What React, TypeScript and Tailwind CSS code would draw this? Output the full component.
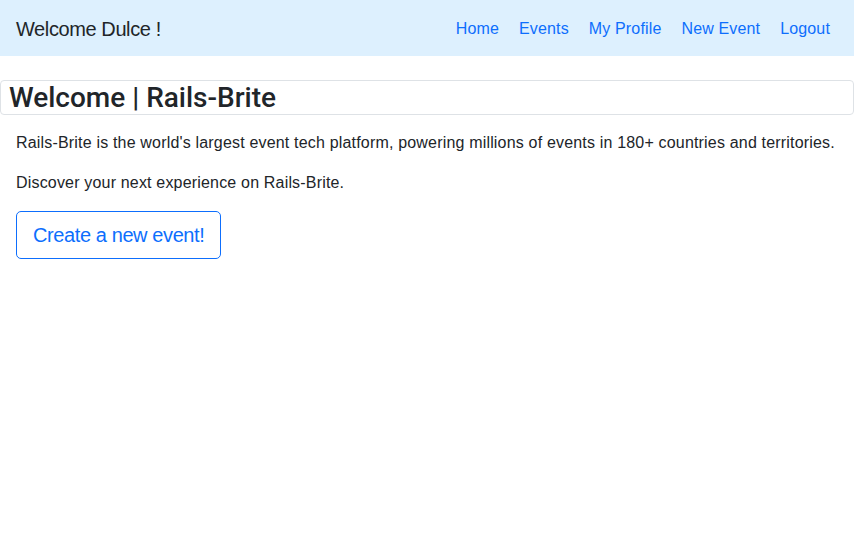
const links = ["Home", "Events", "My Profile", "New Event", "Logout"];

export default function App() {
  return (
    <div className="min-h-[540px] bg-white text-[#212529] font-['Liberation_Sans',sans-serif]">
      <nav className="flex h-14 items-center justify-between bg-[#ddf0fe] pl-4 pr-[14px] pt-px">
        <span className="text-xl tracking-[-0.4px] text-[#212529]">Welcome Dulce !</span>
        <ul className="flex">
          {links.map((l) => (
            <li key={l}>
              <a href="#" className="block px-[10px] text-base tracking-[0.15px] text-[#0d6efd]">
                {l}
              </a>
            </li>
          ))}
        </ul>
      </nav>
      <div className="mt-6 rounded border border-[#dee2e6] px-2 leading-[33px]">
        <h1 className="font-['Roboto',sans-serif] text-[28px] font-medium">Welcome | Rails-Brite</h1>
      </div>
      <main className="px-4 pt-4 tracking-[0.18px]">
        <p className="mb-4 text-base leading-6">
          Rails-Brite is the world's largest event tech platform, powering millions of events in 180+ countries and territories.
        </p>
        <p className="mb-4 text-base leading-6">Discover your next experience on Rails-Brite.</p>
        <a
          href="#"
          className="inline-block rounded-[5px] border border-[#0d6efd] px-4 py-2 text-xl leading-[30px] tracking-[-0.4px] text-[#0d6efd]"
        >
          Create a new event!
        </a>
      </main>
    </div>
  );
}
